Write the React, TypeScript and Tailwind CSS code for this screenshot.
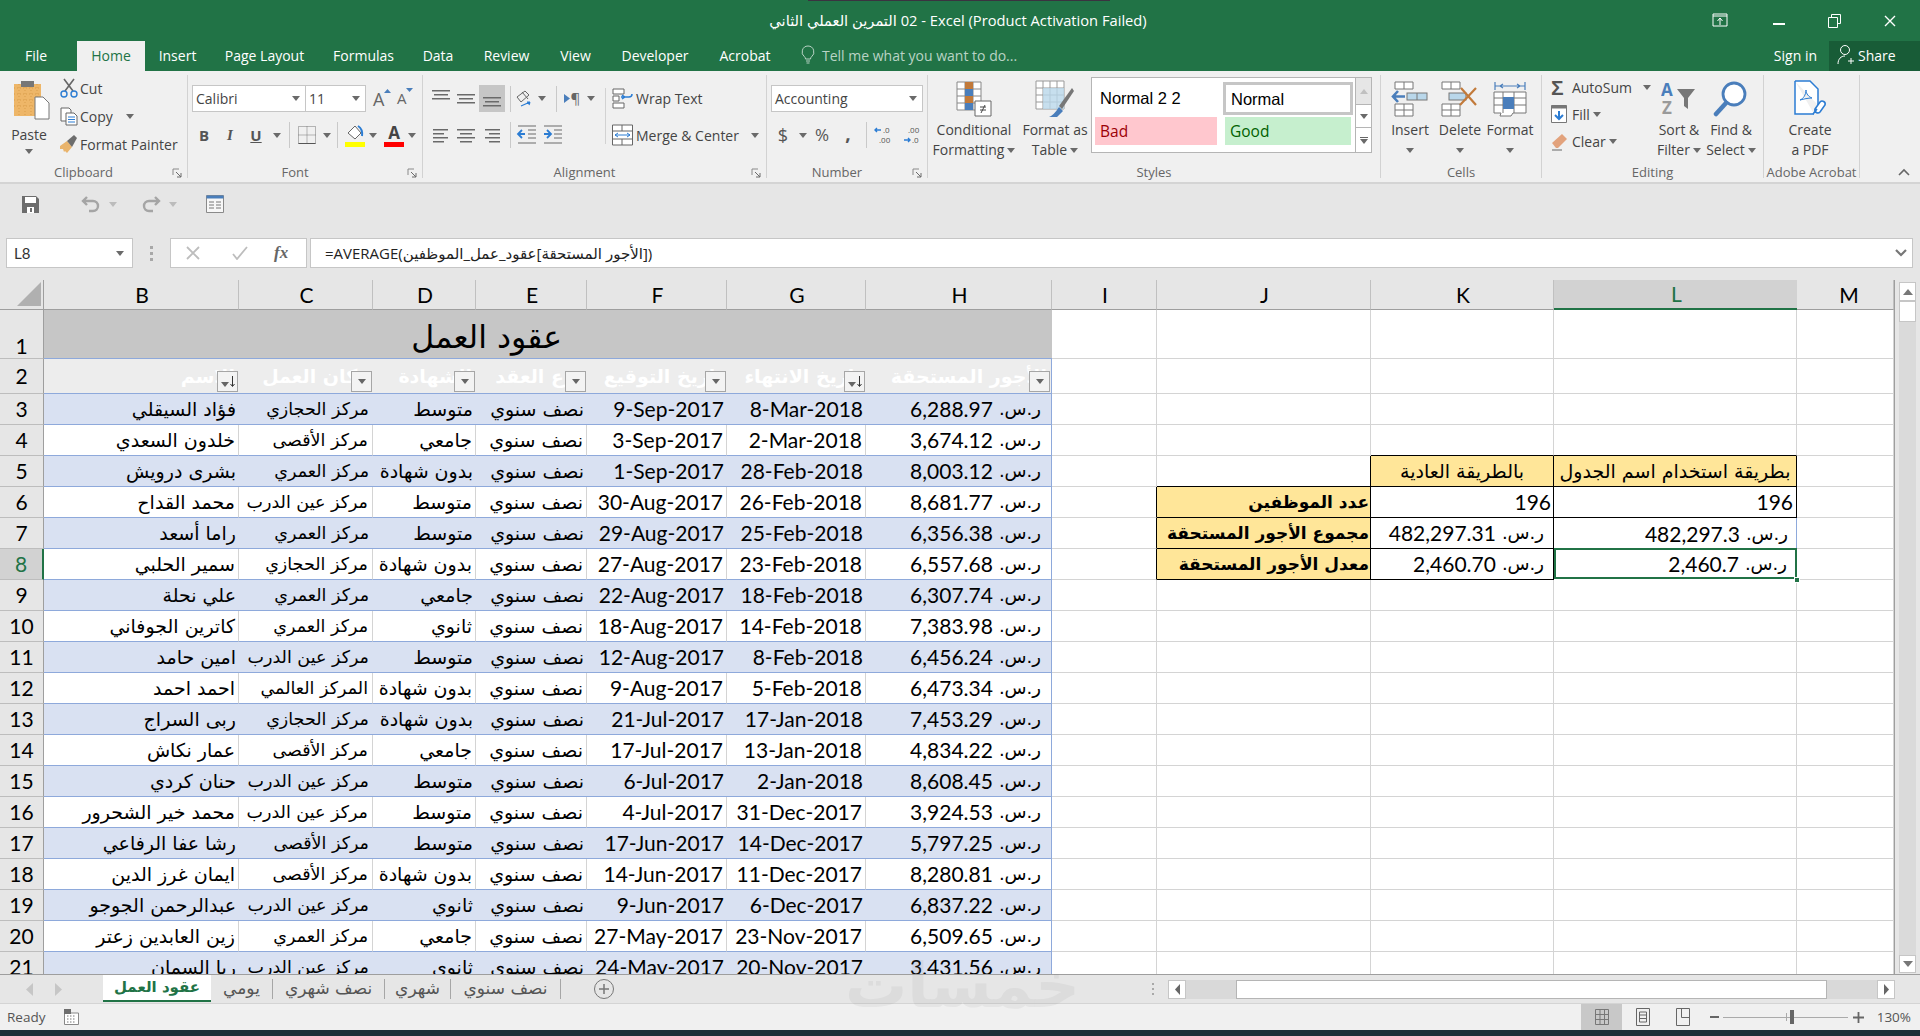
import type { ReactNode } from "react";

const GRID =
  "grid grid-cols-[44px_195px_134px_103px_111px_140px_139px_186px_105px_214px_183px_243px_97px] leading-[24px]";

const Caret = ({ color = "#6a6a6a" }: { color?: string }) => (
  <svg width="8" height="5" viewBox="0 0 8 5" className="shrink-0">
    <path d="M0 0h8L4 5z" fill={color} />
  </svg>
);

const Sep = () => <div className="w-px h-[26px] bg-[#c9c9c9] shrink-0" />;

const Lines = ({ xs }: { xs: [number, number, number][] }) => (
  <svg width="20" height="20" viewBox="0 0 20 20">
    {xs.map(([x, y, w], i) => (
      <rect key={i} x={x} y={y} width={w} height="1.5" fill="#6a6a6a" />
    ))}
  </svg>
);

const Launcher = () => (
  <svg width="10" height="10" viewBox="0 0 10 10" className="absolute right-[5px] top-[2px]">
    <path d="M1 1h6M1 1v6" stroke="#8a8a8a" fill="none" />
    <path d="M4 4l5 5M9 5v4H5" stroke="#6a6a6a" fill="none" />
  </svg>
);

const Group = ({
  className,
  label,
  launcher,
  children,
}: {
  className: string;
  label: string;
  launcher?: boolean;
  children: ReactNode;
}) => (
  <div className={`flex flex-col h-full border-r border-[#d2d2d2] shrink-0 ${className}`}>
    <div className="h-[89px] flex">{children}</div>
    <div
      className={`relative h-[14px] translate-y-[2px] flex items-center justify-center text-[13px] text-[#666] whitespace-nowrap ${
        launcher ? "pr-[20px]" : ""
      }`}
    >
      {label}
      {launcher && <Launcher />}
    </div>
  </div>
);

const BigButton = ({
  className,
  icon,
  lines,
  caretBelow,
}: {
  className: string;
  icon: ReactNode;
  lines: ReactNode[];
  caretBelow?: boolean;
}) => (
  <div className={`flex flex-col items-center shrink-0 ${className}`}>
    <div className="h-[38px] mt-[5px] flex items-center justify-center">{icon}</div>
    <div className="mt-[2px] flex flex-col items-center leading-[20px] whitespace-nowrap text-[#444]">
      {lines.map((l, i) => (
        <div key={i} className="flex items-center gap-[3px] h-[20px]">
          {l}
        </div>
      ))}
      {caretBelow && (
        <div className="h-[20px] flex items-center">
          <Caret />
        </div>
      )}
    </div>
  </div>
);

const SmallCaret = () => <Caret />;

const Select = ({ className, text }: { className: string; text: string }) => (
  <div
    className={`h-[27px] bg-white border border-[#c6c6c6] flex items-center justify-between pl-[3px] pr-[5px] text-[14px] text-[#444] shrink-0 ${className}`}
  >
    <span className="font-['Open_Sans',sans-serif]">{text}</span>
    <Caret />
  </div>
);

const TitleBar = () => (
  <>
    <div className="h-px bg-[#217346] shrink-0">
      <div className="h-px ml-[808px] w-[302px] bg-[#3a3340]" />
    </div>
    <div className="h-[40px] bg-[#217346] flex items-center relative shrink-0">
      <div className="w-full text-center text-[14.7px] text-white -translate-x-[2px] -mt-[1px]" dir="ltr">
        <span dir="rtl">التمرين العملي الثاني</span> 02 - Excel (Product Activation Failed)
      </div>
      <div className="absolute right-0 top-0 h-full flex items-center">
        <svg width="16" height="16" viewBox="0 0 16 16" className="mr-[45px]">
          <path d="M1 1h14v12H1zM1 3h14" stroke="#fff" fill="none" />
          <path d="M8 12V5M5.5 8L8 5l2.500 3" stroke="#fff" fill="none" />
        </svg>
        <div className="w-[12px] h-[2px] bg-white mt-[6px] mr-[43px]" />
        <svg width="13" height="14" viewBox="0 0 13 14" className="mr-[43px]">
          <path d="M3.500 3V.5h9v9H10M.5 3.500h9v10h-9z" stroke="#fff" fill="none" />
        </svg>
        <svg width="12" height="12" viewBox="0 0 12 12" className="mr-[24px]">
          <path d="M1 1l10 10M11 1L1 11" stroke="#fff" strokeWidth="1.400" />
        </svg>
      </div>
    </div>
  </>
);

const TabBar = () => {
  const tabs: [string, string][] = [
    ["Insert", "w-[65px]"],
    ["Page Layout", "w-[109px]"],
    ["Formulas", "w-[89px]"],
    ["Data", "w-[60px]"],
    ["Review", "w-[77px]"],
    ["View", "w-[61px]"],
    ["Developer", "w-[98px]"],
    ["Acrobat", "w-[82px]"],
  ];
  return (
    <div className="h-[30px] bg-[#217346] flex items-stretch text-[14px] text-white shrink-0">
      <div className="w-[77px] flex items-center justify-center pr-[5px] pb-[2px]">File</div>
      <div className="w-[68px] bg-[#f0f0f0] text-[#217346] flex items-center justify-center pb-[2px]">Home</div>
      {tabs.map(([t, w]) => (
        <div key={t} className={`${w} flex items-center justify-center shrink-0 pb-[2px]`}>
          {t}
        </div>
      ))}
      <div className="ml-[15px] flex items-center text-[#b9d3c5] pb-[2px]">
        <svg width="14" height="20" viewBox="0 0 14 20" className="mr-[7px]">
          <path
            d="M7 1a6 6 0 0 0-3.500 10.800c.7.6 1 1.200 1 2.200h5c0-1 .3-1.600 1-2.200A6 6 0 0 0 7 1zM5 16h4M5.500 18h3"
            stroke="#b9d3c5"
            fill="none"
          />
        </svg>
        Tell me what you want to do...
      </div>
      <div className="ml-auto flex items-stretch">
        <div className="flex items-center mr-[12px] pb-[2px]">Sign in</div>
        <div className="w-[91px] bg-[#185c37] flex items-center pl-[8px] gap-[3px] pb-[2px]">
          <svg width="18" height="22" viewBox="0 0 18 22">
            <circle cx="8" cy="6" r="4.500" stroke="#fff" fill="none" />
            <path d="M1 20c0-5 3-8 7-8M11 17h6M14 14v6" stroke="#fff" fill="none" />
          </svg>
          Share
        </div>
      </div>
    </div>
  );
};

const PasteIcon = () => (
  <svg width="38" height="40" viewBox="0 0 38 40">
    <rect x="1" y="4" width="27" height="32" fill="#eeb668" />
    <path d="M1 8h27M1 14h27M1 20h27M1 26h27M6 4v32M12 4v32M18 4v32M24 4v32" stroke="#d99d4a" strokeDasharray="1 2" />
    <rect x="8" y="1" width="13" height="6" fill="#777" />
    <path d="M22 17h8l6 6v16H22z" fill="#fff" stroke="#777" />
  </svg>
);

const Scissors = () => (
  <svg width="18" height="20" viewBox="0 0 18 20">
    <path d="M4 1l9 12M14 1L5 13" stroke="#666" strokeWidth="1.600" />
    <circle cx="4" cy="16" r="3" stroke="#2b7cd3" fill="none" strokeWidth="1.400" />
    <circle cx="14" cy="16" r="3" stroke="#2b7cd3" fill="none" strokeWidth="1.400" />
  </svg>
);

const CopyIcon = () => (
  <svg width="18" height="19" viewBox="0 0 18 19">
    <path d="M1 1h8l2 2v11H1z" fill="#fff" stroke="#666" />
    <path d="M6 6h8l3 3v9H6z" fill="#fff" stroke="#666" />
    <path d="M8 10h7M8 12.500h7M8 15h7" stroke="#2b7cd3" />
  </svg>
);

const BrushIcon = () => (
  <svg width="20" height="20" viewBox="0 0 20 20">
    <path d="M1 12l7-5 5 6-5 6-2-2-1 1-1-3-3 0z" fill="#e9b46c" />
    <path d="M8 7l7-6 3 3-5 9z" fill="#6d6d6d" />
  </svg>
);

const ClipboardGroup = () => (
  <Group className="w-[188px]" label="Clipboard" launcher>
    <div className="w-[58px] flex flex-col items-center shrink-0 pt-[5px]">
      <div className="pl-[5px] h-[40px]">
        <PasteIcon />
      </div>
      <div className="mt-[5px] text-[#444] leading-[20px]">Paste</div>
      <div className="mt-[4px]">
        <Caret />
      </div>
    </div>
    <div className="flex flex-col text-[#444] -mt-px">
      {[
        { icon: <Scissors />, text: "Cut" },
        { icon: <CopyIcon />, text: "Copy", caret: true },
        { icon: <BrushIcon />, text: "Format Painter" },
      ].map((r) => (
        <div key={r.text} className="h-[28px] flex items-center whitespace-nowrap">
          <div className="w-[22px] flex justify-center">{r.icon}</div>
          {r.text}
          {r.caret && (
            <span className="ml-[13px]">
              <Caret />
            </span>
          )}
        </div>
      ))}
    </div>
  </Group>
);

const FontGroup = () => (
  <Group className="w-[235px]" label="Font" launcher>
    <div className="pl-[4px] flex flex-col">
      <div className="mt-[10px] flex items-center">
        <Select className="w-[114px]" text="Calibri" />
        <Select className="w-[61px] -ml-px" text="11" />
        <div className="ml-[7px] w-[24px] text-[18px] leading-none text-[#666] relative">
          A
          <svg width="7" height="4" viewBox="0 0 7 4" className="absolute left-[11px] -top-[1px]">
            <path d="M0 4h7L3.500 0z" fill="#4a7ebb" />
          </svg>
        </div>
        <div className="w-[20px] text-[15px] leading-none text-[#666] relative">
          A
          <svg width="7" height="4" viewBox="0 0 7 4" className="absolute left-[9px] -top-[3px]">
            <path d="M0 0h7L3.500 4z" fill="#4a7ebb" />
          </svg>
        </div>
      </div>
      <div className="mt-[10px] h-[26px] flex items-center text-[#555]">
        <div className="w-[24px] text-center font-bold text-[15px]">B</div>
        <div className="w-[28px] text-center italic font-bold text-[15px] font-['Liberation_Serif',serif]">I</div>
        <div className="w-[24px] text-center font-bold text-[15px] underline">U</div>
        <div className="w-[18px] flex justify-center">
          <SmallCaret />
        </div>
        <div className="ml-[3px] mr-[8px]">
          <Sep />
        </div>
        <svg width="18" height="18" viewBox="0 0 18 18">
          <path d="M.5.5h17v17H.5zM9 .5v17M.5 9h17" stroke="#777" strokeDasharray="1 1" fill="none" />
          <path d="M.5 17.500h17" stroke="#555" />
        </svg>
        <div className="ml-[7px] w-[10px]">
          <SmallCaret />
        </div>
        <div className="ml-[4px] mr-[7px]">
          <Sep />
        </div>
        <div className="w-[20px] flex flex-col items-center">
          <svg width="20" height="18" viewBox="0 0 20 18">
            <path d="M3 9l7-7 6 7-6 6z" fill="#fff" stroke="#666" />
            <path d="M13 2q5 3 4 10" stroke="#2b7cd3" strokeWidth="2" fill="none" />
          </svg>
          <div className="w-[20px] h-[5px] bg-[#ffff00]" />
        </div>
        <div className="ml-[4px] w-[11px]">
          <SmallCaret />
        </div>
        <div className="ml-[4px] w-[20px] flex flex-col items-center">
          <div className="h-[18px] leading-[18px] font-bold text-[17px] text-[#444]">A</div>
          <div className="w-[20px] h-[5px] bg-[#ff0000]" />
        </div>
        <div className="ml-[4px]">
          <SmallCaret />
        </div>
      </div>
    </div>
  </Group>
);

const AlignmentGroup = () => (
  <Group className="w-[344px]" label="Alignment" launcher>
    <div className="pl-[5px] w-[182px] shrink-0 flex flex-col">
      <div className="mt-[10px] h-[27px] flex items-center">
        <div className="w-[25px] flex justify-center -mt-[5px]">
          <Lines xs={[[1, 4, 18], [3, 8, 14], [1, 12, 18]]} />
        </div>
        <div className="w-[26px] flex justify-center">
          <Lines xs={[[1, 5, 18], [3, 9, 14], [1, 13, 18]]} />
        </div>
        <div className="w-[26px] h-[27px] flex items-center justify-center bg-[#c6c6c6] pt-[5px]">
          <Lines xs={[[1, 6, 18], [3, 10, 14], [1, 14, 18]]} />
        </div>
        <div className="ml-[5px]">
          <Sep />
        </div>
        <div className="w-[27px] flex justify-center">
          <svg width="20" height="20" viewBox="0 0 20 20">
            <path d="M2 8l8-6 4 4-8 7zM7 3l6 7" stroke="#666" fill="none" />
            <path d="M6 17l9-4M15 13l-3 0M15 13l-1 3" stroke="#2b7cd3" strokeWidth="1.200" fill="none" />
          </svg>
        </div>
        <div className="w-[10px]">
          <SmallCaret />
        </div>
        <div className="ml-[8px]">
          <Sep />
        </div>
        <div className="w-[30px] flex justify-center items-center text-[#666] text-[15px]">
          <svg width="6" height="9" viewBox="0 0 6 9" className="mr-[1px]">
            <path d="M0 0l6 4.500L0 9z" fill="#4a7ebb" />
          </svg>
          ¶
        </div>
        <SmallCaret />
      </div>
      <div className="mt-[10px] h-[26px] flex items-center">
        <div className="w-[25px] flex justify-center">
          <Lines xs={[[2, 4, 15], [2, 8, 11], [2, 12, 15], [2, 16, 11]]} />
        </div>
        <div className="w-[26px] flex justify-center">
          <Lines xs={[[1, 4, 18], [4, 8, 12], [1, 12, 18], [4, 16, 12]]} />
        </div>
        <div className="w-[26px] flex justify-center">
          <Lines xs={[[3, 4, 15], [7, 8, 11], [3, 12, 15], [7, 16, 11]]} />
        </div>
        <div className="ml-[5px] mr-[5px]">
          <Sep />
        </div>
        <svg width="22" height="20" viewBox="0 0 22 20" className="mr-[4px]">
          <path d="M2 1h18M12 5h8M12 9h8M12 13h8M2 18h18" stroke="#6a6a6a" />
          <path d="M9 9H2M6 5L2 9l4 4" stroke="#2b7cd3" strokeWidth="1.800" fill="none" />
        </svg>
        <svg width="22" height="20" viewBox="0 0 22 20">
          <path d="M2 1h18M12 5h8M12 9h8M12 13h8M2 18h18" stroke="#6a6a6a" />
          <path d="M2 9h7M5 5l4 4-4 4" stroke="#2b7cd3" strokeWidth="1.800" fill="none" />
        </svg>
      </div>
    </div>
    <div className="w-px h-[56px] bg-[#d2d2d2] mt-[13px] shrink-0" />
    <div className="flex flex-col pl-[6px] text-[#444]">
      <div className="mt-[10px] h-[27px] flex items-center gap-[3px] whitespace-nowrap">
        <svg width="21" height="22" viewBox="0 0 21 22">
          <path d="M1 1h11v5H1zM1 8h6v5H1zM1 15h11v5H1z" fill="#fff" stroke="#666" />
          <path d="M9 9h8q3 0 3-3M13 9l-3 2M13 9l-3-2" stroke="#2b7cd3" strokeWidth="1.500" fill="none" />
        </svg>
        Wrap Text
      </div>
      <div className="mt-[10px] h-[26px] flex items-center gap-[3px] whitespace-nowrap">
        <svg width="21" height="22" viewBox="0 0 21 22">
          <path d="M.5 1h20v20H.5zM.5 7h20M.5 15h20M10 1v6M10 15v6" fill="#fff" stroke="#666" />
          <path d="M3 11h15M3 11l3-2M3 11l3 2M18 11l-3-2M18 11l-3 2" stroke="#2b7cd3" fill="none" />
        </svg>
        Merge &amp; Center
        <span className="ml-[9px]">
          <Caret />
        </span>
      </div>
    </div>
  </Group>
);

const NumberGroup = () => (
  <Group className="w-[161px]" label="Number" launcher>
    <div className="pl-[4px] flex flex-col">
      <div className="mt-[10px]">
        <Select className="w-[152px]" text="Accounting" />
      </div>
      <div className="mt-[10px] h-[26px] flex items-center text-[#555]">
        <div className="w-[24px] text-center text-[18px]">$</div>
        <div className="w-[16px] flex justify-center">
          <SmallCaret />
        </div>
        <div className="w-[22px] text-center text-[17px]">%</div>
        <div className="w-[30px] text-center text-[19px] font-bold leading-none -mt-[4px]">,</div>
        <div className="ml-[3px]">
          <Sep />
        </div>
        <div className="w-[33px] flex justify-center">
          <svg width="20" height="20" viewBox="0 0 20 20">
            <path d="M1 5h6M3 3L1 5l2 2" stroke="#2b7cd3" strokeWidth="1.400" fill="none" />
            <text x="9" y="8" fontSize="8" fill="#555">.0</text>
            <text x="5" y="18" fontSize="8" fill="#555">.00</text>
          </svg>
        </div>
        <div className="w-[25px] flex justify-center">
          <svg width="20" height="20" viewBox="0 0 20 20">
            <text x="5" y="8" fontSize="8" fill="#555">.00</text>
            <text x="9" y="18" fontSize="8" fill="#555">.0</text>
            <path d="M1 15h6M5 13l2 2-2 2" stroke="#2b7cd3" strokeWidth="1.400" fill="none" />
          </svg>
        </div>
      </div>
    </div>
  </Group>
);

const CondIcon = () => (
  <svg width="36" height="36" viewBox="0 0 36 36">
    <path d="M1 1h24v28H1zM1 8h24M1 15h24M1 22h24M9 1v28M17 1v28" fill="#fff" stroke="#888" />
    <rect x="9" y="1" width="8" height="7" fill="#c27a3a" />
    <rect x="9" y="8" width="8" height="7" fill="#4a7ebb" />
    <rect x="9" y="15" width="8" height="7" fill="#c27a3a" />
    <rect x="9" y="22" width="8" height="7" fill="#4a7ebb" />
    <path d="M19 20h16v15H19z" fill="#fff" stroke="#666" />
    <path d="M24 26h6M24 29h6M29 24l-4 8" stroke="#444" />
  </svg>
);

const TableIcon = () => (
  <svg width="40" height="38" viewBox="0 0 40 38">
    <path d="M1 1h28v28H1zM1 8h28M1 15h28M1 22h28M8 1v28M15 1v28M22 1v28" fill="#fff" stroke="#999" />
    <rect x="8" y="8" width="21" height="21" fill="#b9d7ea" opacity=".8" />
    <path d="M37 8L24 26l3 3L39 11z" fill="#777" />
    <path d="M24 27l4 4-6 6H14q5-2 10-10z" fill="#4a7ebb" />
  </svg>
);

const GalleryCell = ({ className, text }: { className: string; text: string }) => (
  <div className={`flex items-center ${className}`}>{text}</div>
);

const StylesGroup = () => (
  <Group className="w-[453px]" label="Styles">
    <BigButton
      className="w-[92px]"
      icon={<CondIcon />}
      lines={["Conditional", <>Formatting <Caret /></>]}
    />
    <BigButton
      className="w-[62px] ml-[4px]"
      icon={<TableIcon />}
      lines={["Format as", <>Table <Caret /></>]}
    />
    <div className="ml-[5px] mt-[2px] w-[281px] h-[76px] border border-[#b5b5b5] bg-white flex shrink-0">
      <div className="w-[263px] grid grid-cols-[127px_136px] grid-rows-[39px_1fr] text-[16.500px] leading-[22px] font-['Liberation_Sans',sans-serif]">
        <GalleryCell className="pl-[8px] pt-[1px] text-black" text="Normal 2 2" />
        <GalleryCell className="m-[4px] mr-[2px] mb-[2px] border-[3px] border-[#c6c6c6] pl-[5px] text-black" text="Normal" />
        <div className="pl-[3px] pr-[2px] pb-[7px]">
          <GalleryCell className="h-full pl-[5px] bg-[#ffc7ce] text-[#9c0006] text-[15.500px] font-['Open_Sans',sans-serif]" text="Bad" />
        </div>
        <div className="pl-[6px] pr-[4px] pb-[7px]">
          <GalleryCell className="h-full pl-[5px] bg-[#c6efce] text-[#006100] text-[15.500px] font-['Open_Sans',sans-serif]" text="Good" />
        </div>
      </div>
      <div className="w-[17px] border-l border-[#b5b5b5] flex flex-col">
        <div className="h-[26px] bg-[#e6e6e6] flex items-center justify-center">
          <svg width="8" height="5" viewBox="0 0 8 5">
            <path d="M0 5h8L4 0z" fill="#c0c0c0" />
          </svg>
        </div>
        <div className="h-[23px] border-t border-[#b5b5b5] flex items-center justify-center">
          <Caret />
        </div>
        <div className="flex-1 border-t border-[#b5b5b5] flex flex-col items-center justify-center">
          <div className="w-[8px] h-px bg-[#666] mb-[1px]" />
          <Caret />
        </div>
      </div>
    </div>
  </Group>
);

const InsertIcon = () => (
  <svg width="38" height="36" viewBox="0 0 38 36">
    <path d="M4 1h18v7H4zM13 1v7M4 23h18v12H4zM4 29h18M13 23v12" fill="#fff" stroke="#777" />
    <rect x="16" y="12" width="20" height="7" fill="#b9d7ea" stroke="#777" />
    <path d="M26 12v7" stroke="#777" />
    <path d="M14 15.500H2M7 10l-5 5.500L7 21" stroke="#4a7ebb" strokeWidth="2.600" fill="none" />
  </svg>
);

const DeleteIcon = () => (
  <svg width="38" height="36" viewBox="0 0 38 36">
    <path d="M1 1h18v7H1zM10 1v7M1 23h18v12H1zM1 29h18M10 23v12" fill="#fff" stroke="#777" />
    <rect x="8" y="12" width="17" height="7" fill="#b9d7ea" stroke="#777" />
    <path d="M20 7l15 17M35 7L19 24" stroke="#c27a3a" strokeWidth="2.200" />
  </svg>
);

const FormatIcon = () => (
  <svg width="34" height="36" viewBox="0 0 34 36">
    <path d="M2 5h30M2 1v8M32 1v8M7 5l3-2M7 5l3 2M27 5l-3-2M27 5l-3 2" stroke="#4a7ebb" strokeWidth="1.200" fill="none" />
    <path d="M1 11h32v21H20l-2 3H7l1-3H1zM1 17h32M1 24h32M10 11v21M21 11v21" fill="#fff" stroke="#777" />
    <rect x="10" y="16" width="11" height="12" fill="#4a7ebb" />
  </svg>
);

const CellsGroup = () => (
  <Group className="w-[161px]" label="Cells">
    <div className="pl-[4px] flex">
      <BigButton className="w-[50px]" icon={<InsertIcon />} lines={["Insert"]} caretBelow />
      <BigButton className="w-[50px]" icon={<DeleteIcon />} lines={["Delete"]} caretBelow />
      <BigButton className="w-[50px]" icon={<FormatIcon />} lines={["Format"]} caretBelow />
    </div>
  </Group>
);

const SortIcon = () => (
  <svg width="36" height="36" viewBox="0 0 36 36">
    <text x="0" y="15" fontSize="17" fontWeight="700" fill="#4a7ebb" fontFamily="Open Sans">A</text>
    <text x="1" y="33" fontSize="17" fontWeight="700" fill="#9a9a9a" fontFamily="Open Sans">Z</text>
    <path d="M16 8h18l-7 9v11l-4-3v-8z" fill="#777" />
  </svg>
);

const FindIcon = () => (
  <svg width="36" height="38" viewBox="0 0 36 38">
    <circle cx="21" cy="14" r="11" fill="#fff" stroke="#4a7ebb" strokeWidth="2.800" />
    <path d="M13 23L3 34" stroke="#4a7ebb" strokeWidth="4.500" strokeLinecap="round" />
  </svg>
);

const EditingGroup = () => (
  <Group className="w-[222px]" label="Editing">
    <div className="w-[109px] shrink-0 flex flex-col pl-[9px] text-[#444] -mt-px">
      <div className="h-[27px] flex items-center whitespace-nowrap">
        <span className="w-[21px] text-[21px] leading-none font-bold text-[#555] font-['Liberation_Sans',sans-serif]">Σ</span>
        AutoSum
        <span className="ml-[11px]">
          <Caret />
        </span>
      </div>
      <div className="h-[27px] flex items-center whitespace-nowrap">
        <svg width="17" height="19" viewBox="0 0 17 19" className="mr-[4px]">
          <path d="M.5.5h15v17H.5z" fill="#fff" stroke="#777" />
          <path d="M.5.5h15v3H.5z" fill="#777" />
          <path d="M8 6v8M4 10l4 4 4-4" stroke="#2b7cd3" strokeWidth="2" fill="none" />
        </svg>
        Fill
        <span className="ml-[3px]">
          <Caret />
        </span>
      </div>
      <div className="h-[27px] flex items-center whitespace-nowrap">
        <svg width="17" height="19" viewBox="0 0 17 19" className="mr-[4px]">
          <path d="M1 11L11 2l5 5-9 9H5z" fill="#e2a27c" />
          <path d="M1 18h10" stroke="#666" />
        </svg>
        Clear
        <span className="ml-[3px]">
          <Caret />
        </span>
      </div>
    </div>
    <BigButton
      className="w-[56px]"
      icon={<SortIcon />}
      lines={["Sort &", <>Filter <Caret /></>]}
    />
    <BigButton
      className="w-[48px]"
      icon={<FindIcon />}
      lines={["Find &", <>Select <Caret /></>]}
    />
  </Group>
);

const PdfIcon = () => (
  <svg width="34" height="38" viewBox="0 0 34 38">
    <path d="M2 1h15l8 8v16M21 34H2V1" fill="#fff" stroke="#2b7cd3" strokeWidth="1.500" />
    <path d="M7 20c3-1 6-5 6-10 0 4 3 7 6 8-4 0-8 1-12 2z" fill="none" stroke="#2b7cd3" />
    <path d="M22 29l5-7a3 3 0 0 1 5 3l-5 7a3 3 0 0 1-5-3zM20 34l4-5" stroke="#2b7cd3" strokeWidth="1.600" fill="#fff" />
  </svg>
);

const Ribbon = () => (
  <div className="h-[113px] bg-[#f0f0f0] border-b-2 border-[#d4d4d4] pt-[4px] pb-[4px] flex text-[14px] text-[#444] shrink-0">
    <ClipboardGroup />
    <FontGroup />
    <AlignmentGroup />
    <NumberGroup />
    <StylesGroup />
    <CellsGroup />
    <EditingGroup />
    <Group className="w-[96px]" label="Adobe Acrobat">
      <BigButton className="w-[92px]" icon={<PdfIcon />} lines={["Create", "a PDF"]} />
    </Group>
    <div className="flex-1 flex items-end justify-end pr-[10px] pb-[2px]">
      <svg width="12" height="8" viewBox="0 0 12 8">
        <path d="M1 7l5-5 5 5" stroke="#666" strokeWidth="1.600" fill="none" />
      </svg>
    </div>
  </div>
);

const QuickAccess = () => (
  <div className="h-[46px] flex items-center pl-[22px] pb-[6px] shrink-0">
    <svg width="17" height="17" viewBox="0 0 17 17" className="mr-[42px]">
      <path d="M0 0h14l3 3v14H0z" fill="#6d6d6d" />
      <path d="M3 1h11v6H3z" fill="#fff" />
      <path d="M5 11h7v6H5z" fill="#fff" />
      <path d="M8 12h2v4H8z" fill="#6d6d6d" />
    </svg>
    <svg width="20" height="18" viewBox="0 0 20 18" className="mr-[8px]">
      <path d="M6 2L2 6l4 4M2 6h10a5 5 0 0 1 0 10H8" stroke="#a5a5a5" strokeWidth="2.400" fill="none" />
    </svg>
    <Caret color="#bcbcbc" />
    <svg width="20" height="18" viewBox="0 0 20 18" className="ml-[24px] mr-[8px]">
      <path d="M14 2l4 4-4 4M18 6H8a5 5 0 0 0 0 10h4" stroke="#a5a5a5" strokeWidth="2.400" fill="none" />
    </svg>
    <Caret color="#bcbcbc" />
    <svg width="18" height="18" viewBox="0 0 18 18" className="ml-[29px]">
      <path d="M.5.5h17v17H.5z" fill="#f7f7f7" stroke="#8a8a8a" />
      <path d="M.5.5h17v3H.5z" fill="#4a7ebb" />
      <path d="M3 7h5M10 7h5M3 10h5M10 10h5M3 13h5M10 13h5" stroke="#777" />
    </svg>
  </div>
);

const FormulaBar = () => (
  <div className="h-[30px] mt-[8px] flex items-stretch shrink-0 pl-[6px] pr-[7px] text-[14px]">
    <div className="w-[127px] bg-white border border-[#c6c6c6] flex items-center justify-between pl-[7px] pr-[8px] text-[#333] font-['Lato',sans-serif] text-[15px]">
      L8
      <Caret />
    </div>
    <div className="w-[37px] flex items-center justify-center">
      <div className="flex flex-col gap-[3px]">
        <div className="w-[3px] h-[3px] bg-[#a8a8a8]" />
        <div className="w-[3px] h-[3px] bg-[#a8a8a8]" />
        <div className="w-[3px] h-[3px] bg-[#a8a8a8]" />
      </div>
    </div>
    <div className="w-[137px] bg-white border border-[#c6c6c6] flex items-center pl-[15px]">
      <svg width="14" height="14" viewBox="0 0 14 14">
        <path d="M1 1l12 12M13 1L1 13" stroke="#bdbdbd" strokeWidth="1.800" />
      </svg>
      <svg width="16" height="14" viewBox="0 0 16 14" className="ml-[32px]">
        <path d="M1 8l4 5L15 1" stroke="#bdbdbd" strokeWidth="1.800" fill="none" />
      </svg>
      <span className="ml-[26px] italic font-bold text-[17px] text-[#666] font-['Liberation_Serif',serif]">fx</span>
    </div>
    <div className="ml-[3px] flex-1 bg-white border border-[#c6c6c6] flex items-center justify-between pl-[14px] pr-[5px] text-[#222]" dir="ltr">
      <span className="text-[15px]">
        =AVERAGE(<bdi>عقود_عمل_الموظفين</bdi>[<bdi>الأجور المستحقة</bdi>])
      </span>
      <svg width="12" height="8" viewBox="0 0 12 8">
        <path d="M1 1l5 5 5-5" stroke="#777" strokeWidth="2.200" fill="none" />
      </svg>
    </div>
  </div>
);

const columns = ["B", "C", "D", "E", "F", "G", "H", "I", "J", "K", "L", "M"];

const ColumnHeaders = () => (
  <div className={`${GRID} h-[30px] bg-[#e6e6e6] text-[21px] text-black font-['Lato',sans-serif]`}>
    <div className="border-b border-[#9e9e9e] border-r flex items-end justify-end">
      <svg width="24" height="24" viewBox="0 0 24 24" className="mr-[2px] mb-[3px]">
        <path d="M24 0v24H0z" fill="#b0b0b0" />
      </svg>
    </div>
    {columns.map((c) => (
      <div
        key={c}
        className={
          c === "L"
            ? "flex items-center justify-center bg-[#d2d2d2] border-b-2 border-[#217346] text-[#217346] pl-[2px]"
            : c === "M"
              ? "flex items-center justify-center border-r border-b border-r-[#c0c0c0] border-b-[#9e9e9e] pl-[8px]"
              : "flex items-center justify-center border-r border-b border-r-[#c0c0c0] border-b-[#9e9e9e] pl-[2px]"
        }
      >
        {c}
      </div>
    ))}
  </div>
);

const rows: [string, string, string, string, string, string][] = [
  ["فؤاد السيقلي", "مركز الحجازي", "متوسط", "9-Sep-2017", "8-Mar-2018", "6,288.97"],
  ["خلدون السعدي", "مركز الأقصى", "جامعي", "3-Sep-2017", "2-Mar-2018", "3,674.12"],
  ["بشرى درويش", "مركز العمري", "بدون شهادة", "1-Sep-2017", "28-Feb-2018", "8,003.12"],
  ["محمد القداح", "مركز عين الدرب", "متوسط", "30-Aug-2017", "26-Feb-2018", "8,681.77"],
  ["راما أسعد", "مركز العمري", "متوسط", "29-Aug-2017", "25-Feb-2018", "6,356.38"],
  ["سمير الحلبي", "مركز الحجازي", "بدون شهادة", "27-Aug-2017", "23-Feb-2018", "6,557.68"],
  ["علي نحلة", "مركز العمري", "جامعي", "22-Aug-2017", "18-Feb-2018", "6,307.74"],
  ["كاترين الجوفاني", "مركز العمري", "ثانوي", "18-Aug-2017", "14-Feb-2018", "7,383.98"],
  ["امين حامد", "مركز عين الدرب", "متوسط", "12-Aug-2017", "8-Feb-2018", "6,456.24"],
  ["احمد احمد", "المركز العالمي", "بدون شهادة", "9-Aug-2017", "5-Feb-2018", "6,473.34"],
  ["ربى السراج", "مركز الحجازي", "بدون شهادة", "21-Jul-2017", "17-Jan-2018", "7,453.29"],
  ["عمار نكاش", "مركز الأقصى", "جامعي", "17-Jul-2017", "13-Jan-2018", "4,834.22"],
  ["حنان كردي", "مركز عين الدرب", "متوسط", "6-Jul-2017", "2-Jan-2018", "8,608.45"],
  ["محمد خير الشحرور", "مركز عين الدرب", "متوسط", "4-Jul-2017", "31-Dec-2017", "3,924.53"],
  ["رشا عفا الرفاعي", "مركز الأقصى", "متوسط", "17-Jun-2017", "14-Dec-2017", "5,797.25"],
  ["ايمان غرز الدين", "مركز الأقصى", "بدون شهادة", "14-Jun-2017", "11-Dec-2017", "8,280.81"],
  ["عبدالرحمن الجوجو", "مركز عين الدرب", "ثانوي", "9-Jun-2017", "6-Dec-2017", "6,837.22"],
  ["زين العابدين زعتر", "مركز العمري", "جامعي", "27-May-2017", "23-Nov-2017", "6,509.65"],
  ["ريا السمان", "مركز عين الدرب", "ثانوي", "24-May-2017", "20-Nov-2017", "3,431.56"],
];

const headers = ["الاسم", "مكان العمل", "الشهادة", "نوع العقد", "تاريخ التوقيع", "تاريخ الانتهاء", "الأجور المستحقة"];

const Money = ({ value, className }: { value: string; className: string }) => (
  <div className={`flex items-center justify-end gap-[6px] ${className}`} dir="ltr">
    <span className="font-['Lato',sans-serif]">{value}</span>
    <span dir="rtl" className="text-[18px] font-['DejaVu_Sans',sans-serif]">ر.س.</span>
  </div>
);

const GRID_LINE = "border-r-[#d4d4d4] border-b-[#d4d4d4]";

const Plain = ({ className = GRID_LINE }: { className?: string }) => (
  <div className={`border-r border-b ${className}`} />
);

const FilterButton = ({ sort }: { sort?: boolean }) => (
  <div className="absolute right-[1px] bottom-[1px] w-[21px] h-[21px] bg-[#f3f3f3] border border-[#a6a6a6] flex items-center justify-center gap-[1px]">
    <svg width="8" height="5" viewBox="0 0 8 5" className={sort ? "mt-[5px]" : ""}>
      <path d="M0 0h8L4 5z" fill="#666" />
    </svg>
    {sort && (
      <svg width="5" height="11" viewBox="0 0 5 11">
        <path d="M2.500 0v10M0.500 8l2 2.500L4.500 8" stroke="#333" fill="none" />
      </svg>
    )}
  </div>
);

const AR_CELL = "flex items-center justify-end pr-[3px] text-[19px] font-['DejaVu_Sans',sans-serif] overflow-hidden whitespace-nowrap";
const AR_CELL_C = "flex items-center justify-end pr-[4px] text-[17.500px] font-['DejaVu_Sans',sans-serif] overflow-hidden whitespace-nowrap";
const NUM_CELL = "flex items-center justify-end pr-[3px] text-[21px] font-['Lato',sans-serif] whitespace-nowrap";
const YELLOW_AR = "flex items-center justify-end pr-[1px] bg-[#ffe699] text-[17px] font-bold font-['DejaVu_Sans',sans-serif] whitespace-nowrap border-r border-b border-black overflow-hidden";
const YELLOW_HEAD = "flex items-center justify-center bg-[#ffe699] text-[19px] font-['DejaVu_Sans',sans-serif] whitespace-nowrap border-r border-b border-black overflow-hidden";
const BOXED = "border-r border-b border-black";

const RightPart = ({ n }: { n: number }) => {
  if (n === 5)
    return (
      <>
        <Plain />
        <Plain className="border-r-black border-b-black" />
        <div className={YELLOW_HEAD} dir="rtl">
          بالطريقة العادية
        </div>
        <div className={YELLOW_HEAD} dir="rtl">
          بطريقة استخدام اسم الجدول
        </div>
        <Plain />
      </>
    );
  if (n === 6)
    return (
      <>
        <Plain className="border-r-black border-b-[#d4d4d4]" />
        <div className={YELLOW_AR} dir="rtl">
          <span className="w-full">عدد الموظفين</span>
        </div>
        <div className={`flex items-center justify-end pr-[2px] text-[21px] font-['Lato',sans-serif] ${BOXED}`}>196</div>
        <div className={`flex items-center justify-end pr-[3px] text-[21px] font-['Lato',sans-serif] ${BOXED}`}>196</div>
        <Plain />
      </>
    );
  if (n === 7)
    return (
      <>
        <Plain className="border-r-black border-b-[#d4d4d4]" />
        <div className={YELLOW_AR} dir="rtl">
          <span className="w-full">مجموع الأجور المستحقة</span>
        </div>
        <Money value="482,297.31" className={`pr-[9px] text-[21px] ${BOXED}`} />
        <Money value="482,297.3" className="pr-[8px] text-[21px] border-r border-[#8ea9db]" />
        <Plain />
      </>
    );
  if (n === 8)
    return (
      <>
        <Plain className="border-r-black border-b-[#d4d4d4]" />
        <div className={YELLOW_AR} dir="rtl">
          <span className="w-full">معدل الأجور المستحقة</span>
        </div>
        <Money value="2,460.70" className={`pr-[9px] text-[21px] ${BOXED}`} />
        <div className="relative">
          <Money value="2,460.7" className="h-full pr-[8px] text-[21px] border-2 border-[#217346] -mt-px" />
          <div className="absolute -right-[3px] -bottom-[3px] w-[6px] h-[6px] bg-[#217346] border border-white" />
        </div>
        <Plain />
      </>
    );
  return (
    <>
      <Plain />
      <Plain />
      <Plain className={n === 4 ? "border-r-[#d4d4d4] border-b-black" : GRID_LINE} />
      <Plain className={n === 4 ? "border-r-[#d4d4d4] border-b-black" : GRID_LINE} />
      <Plain />
    </>
  );
};

const Sheet = () => (
  <div className="flex-1 min-w-0 h-full overflow-hidden bg-white">
    <ColumnHeaders />
    {/* row 1 */}
    <div className={`${GRID} h-[49px]`}>
      <div className="bg-[#e6e6e6] border-r border-b border-r-[#9e9e9e] border-b-[#bdbdbd] flex items-end justify-center text-[21px] font-['Lato',sans-serif]">
        1
      </div>
      <div className="col-span-7 bg-[#c6c6c6] border-b border-[#8ea9db] flex items-center justify-end pr-[490px] pt-[6px] text-[31.500px] leading-[38px] font-['DejaVu_Sans',sans-serif] whitespace-nowrap" dir="ltr">
        <span dir="rtl">عقود العمل</span>
      </div>
      <Plain />
      <Plain />
      <Plain />
      <Plain />
      <Plain />
    </div>
    {/* row 2 */}
    <div className={`${GRID} h-[35px]`}>
      <div className="bg-[#e6e6e6] border-r border-b border-r-[#9e9e9e] border-b-[#bdbdbd] flex items-center justify-center text-[21px] font-['Lato',sans-serif]">
        2
      </div>
      {headers.map((h, i) => (
        <div
          key={h}
          className={`relative bg-[#ededed] border-b border-[#8ea9db] flex items-center justify-end pr-[4px] text-white font-bold text-[19px] font-['DejaVu_Sans',sans-serif] overflow-hidden whitespace-nowrap ${i === 6 ? "border-r" : ""}`}
          dir="ltr"
        >
          <span dir="rtl">{h}</span>
          <FilterButton sort={i === 0 || i === 5} />
        </div>
      ))}
      <Plain />
      <Plain />
      <Plain />
      <Plain />
      <Plain />
    </div>
    {rows.map((r, i) => {
      const n = i + 3;
      const band = n % 2 === 1;
      const cell = band
        ? "bg-[#d9e1f2] border-b border-[#8ea9db]"
        : "border-b border-r border-r-[#d4d4d4] border-b-[#8ea9db]";
      const current = n === 8;
      return (
        <div key={n} className={`${GRID} h-[31px] text-black`}>
          <div
            className={
              current
                ? "bg-[#d2d2d2] border-r-2 border-r-[#217346] border-b border-b-[#bdbdbd] flex items-center justify-center text-[21px] text-[#217346] font-['Lato',sans-serif]"
                : "bg-[#e6e6e6] border-r border-r-[#9e9e9e] border-b border-b-[#bdbdbd] flex items-center justify-center text-[21px] font-['Lato',sans-serif]"
            }
          >
            {n}
          </div>
          <div className={`${AR_CELL} ${cell}`} dir="rtl">
            <span className="w-full">{r[0]}</span>
          </div>
          <div className={`${AR_CELL_C} ${cell}`} dir="rtl">
            <span className="w-full">{r[1]}</span>
          </div>
          <div className={`${AR_CELL} ${cell}`} dir="rtl">
            <span className="w-full">{r[2]}</span>
          </div>
          <div className={`${AR_CELL} ${cell}`} dir="rtl">
            <span className="w-full">نصف سنوي</span>
          </div>
          <div className={`${NUM_CELL} ${cell}`}>{r[3]}</div>
          <div className={`${NUM_CELL} ${cell}`}>{r[4]}</div>
          <Money
            value={r[5]}
            className={
              band
                ? "pr-[10px] text-[21px] bg-[#d9e1f2] border-b border-r border-[#8ea9db]"
                : "pr-[10px] text-[21px] border-b border-r border-[#8ea9db]"
            }
          />
          <RightPart n={n} />
        </div>
      );
    })}
  </div>
);

const VScroll = () => (
  <div className="w-[26px] h-full bg-[#e6e6e6] flex flex-col pl-[4px] pr-[4px] pt-[2px] pb-[1px] shrink-0 border-l border-[#9e9e9e]">
    <div className="h-[19px] bg-white border border-[#c6c6c6] flex items-center justify-center">
      <svg width="10" height="6" viewBox="0 0 10 6">
        <path d="M0 6h10L5 0z" fill="#777" />
      </svg>
    </div>
    <div className="flex-1 bg-[#dadada] flex flex-col">
      <div className="h-[21px] bg-white border border-[#c6c6c6]" />
    </div>
    <div className="h-[18px] bg-white border border-[#c6c6c6] flex items-center justify-center">
      <svg width="10" height="6" viewBox="0 0 10 6">
        <path d="M0 0h10L5 6z" fill="#777" />
      </svg>
    </div>
  </div>
);

const sheetTabs: [string, string][] = [
  ["يومي", "w-[62px]"],
  ["نصف شهري", "w-[112px]"],
  ["شهري", "w-[66px]"],
  ["نصف سنوي", "w-[110px]"],
];

const SheetTabs = () => (
  <div className="relative h-[29px] bg-[#e6e6e6] border-t border-[#9e9e9e] flex items-start shrink-0 font-['DejaVu_Sans',sans-serif] text-[17px] text-[#555]">
    <div className="w-[103px] flex items-center h-full pl-[26px] gap-[22px]">
      <svg width="7" height="13" viewBox="0 0 7 13">
        <path d="M7 0v13L0 6.500z" fill="#c6c6c6" />
      </svg>
      <svg width="7" height="13" viewBox="0 0 7 13">
        <path d="M0 0v13l7-6.500z" fill="#c6c6c6" />
      </svg>
    </div>
    <div className="w-[108px] h-[27px] bg-white border-b-2 border-[#217346] flex items-center justify-center font-bold text-[15px] text-[#217346]" dir="rtl">
      عقود العمل
    </div>
    {sheetTabs.map(([t, w]) => (
      <div key={t} className={`${w} h-[20px] mt-[4px] border-r border-[#a6a6a6] flex items-center justify-center shrink-0`} dir="ltr">
        <span dir="rtl">{t}</span>
      </div>
    ))}
    <div className="ml-[33px] mt-[4px] w-[20px] h-[20px] rounded-full border border-[#777] flex items-center justify-center">
      <svg width="12" height="12" viewBox="0 0 12 12">
        <path d="M6 1v10M1 6h10" stroke="#777" strokeWidth="1.500" />
      </svg>
    </div>
    <div className="ml-auto mr-[25px] h-full flex items-center">
      <div className="flex flex-col gap-[3px] mr-[14px]">
        <div className="w-[2px] h-[2px] bg-[#a8a8a8]" />
        <div className="w-[2px] h-[2px] bg-[#a8a8a8]" />
        <div className="w-[2px] h-[2px] bg-[#a8a8a8]" />
      </div>
      <div className="w-[727px] h-[19px] bg-[#d9d9d9] flex items-stretch">
        <div className="w-[18px] bg-white border border-[#c6c6c6] flex items-center justify-center">
          <svg width="5" height="11" viewBox="0 0 5 11">
            <path d="M5 0v11L0 5.500z" fill="#666" />
          </svg>
        </div>
        <div className="ml-[50px] w-[591px] bg-white border border-[#b5b5b5]" />
        <div className="ml-auto w-[18px] bg-white border border-[#c6c6c6] flex items-center justify-center">
          <svg width="5" height="11" viewBox="0 0 5 11">
            <path d="M0 0v11l5-5.500z" fill="#666" />
          </svg>
        </div>
      </div>
    </div>
    <div className="absolute left-[845px] -top-[20px] text-[62px] leading-[62px] font-bold text-[#888] opacity-10 pointer-events-none select-none" dir="rtl">
      خمسات
    </div>
  </div>
);

const StatusBar = () => (
  <div className="h-[27px] bg-[#f0f0f0] border-t border-[#d4d4d4] flex items-stretch text-[13.500px] text-[#555] shrink-0">
    <div className="flex items-center pl-[7px] w-[64px]">Ready</div>
    <div className="flex items-center">
      <svg width="15" height="16" viewBox="0 0 15 16">
        <path d="M.5 4h14v11.500H.5z" fill="#fff" stroke="#888" />
        <path d="M0 0h7v5H0z" fill="#6d6d6d" />
        <path d="M3 7h9M3 10h9M3 13h9" stroke="#777" strokeDasharray="1.500 1.500" />
      </svg>
    </div>
    <div className="ml-auto flex items-stretch">
      <div className="w-[41px] bg-[#c8c8c8] flex items-center justify-center">
        <svg width="14" height="16" viewBox="0 0 14 16">
          <path d="M.5.5h13v15H.5zM.5 5.500h13M.5 10.500h13M5 .5v15M9.500.5v15" stroke="#777" fill="none" />
        </svg>
      </div>
      <div className="w-[41px] flex items-center justify-center">
        <svg width="14" height="18" viewBox="0 0 14 18">
          <path d="M.5.5h13v17H.5zM3.500 4h7v10h-7zM3.500 7h7M3.500 10.500h7" stroke="#666" fill="none" />
        </svg>
      </div>
      <div className="w-[40px] flex items-center justify-center">
        <svg width="14" height="18" viewBox="0 0 14 18">
          <path d="M.5.5h13v17H.5zM5.500.5v9h8" stroke="#666" fill="none" />
        </svg>
      </div>
      <div className="flex items-center">
        <div className="ml-[7px] w-[9px] h-[2px] bg-[#666]" />
        <div className="ml-[4px] w-[125px] h-px bg-[#aaa] flex items-center">
          <div className="ml-[63px] w-[1px] h-[8px] bg-[#aaa]" />
          <div className="ml-[3px] w-[4px] h-[14px] bg-[#666]" />
        </div>
        <svg width="11" height="11" viewBox="0 0 11 11" className="ml-[5px]">
          <path d="M5.500 0v11M0 5.500h11" stroke="#666" strokeWidth="1.800" />
        </svg>
        <div className="w-[56px] text-right pr-[9px]">130%</div>
      </div>
    </div>
  </div>
);

export default function App() {
  return (
    <div className="w-[1920px] h-[1036px] overflow-hidden bg-[#e6e6e6] flex flex-col font-['Open_Sans','DejaVu_Sans',sans-serif]">
      <TitleBar />
      <TabBar />
      <Ribbon />
      <QuickAccess />
      <FormulaBar />
      <div className="mt-[12px] h-[694px] flex shrink-0">
        <Sheet />
        <VScroll />
      </div>
      <SheetTabs />
      <StatusBar />
      <div className="flex-1 bg-[#1f2f36]" />
    </div>
  );
}
